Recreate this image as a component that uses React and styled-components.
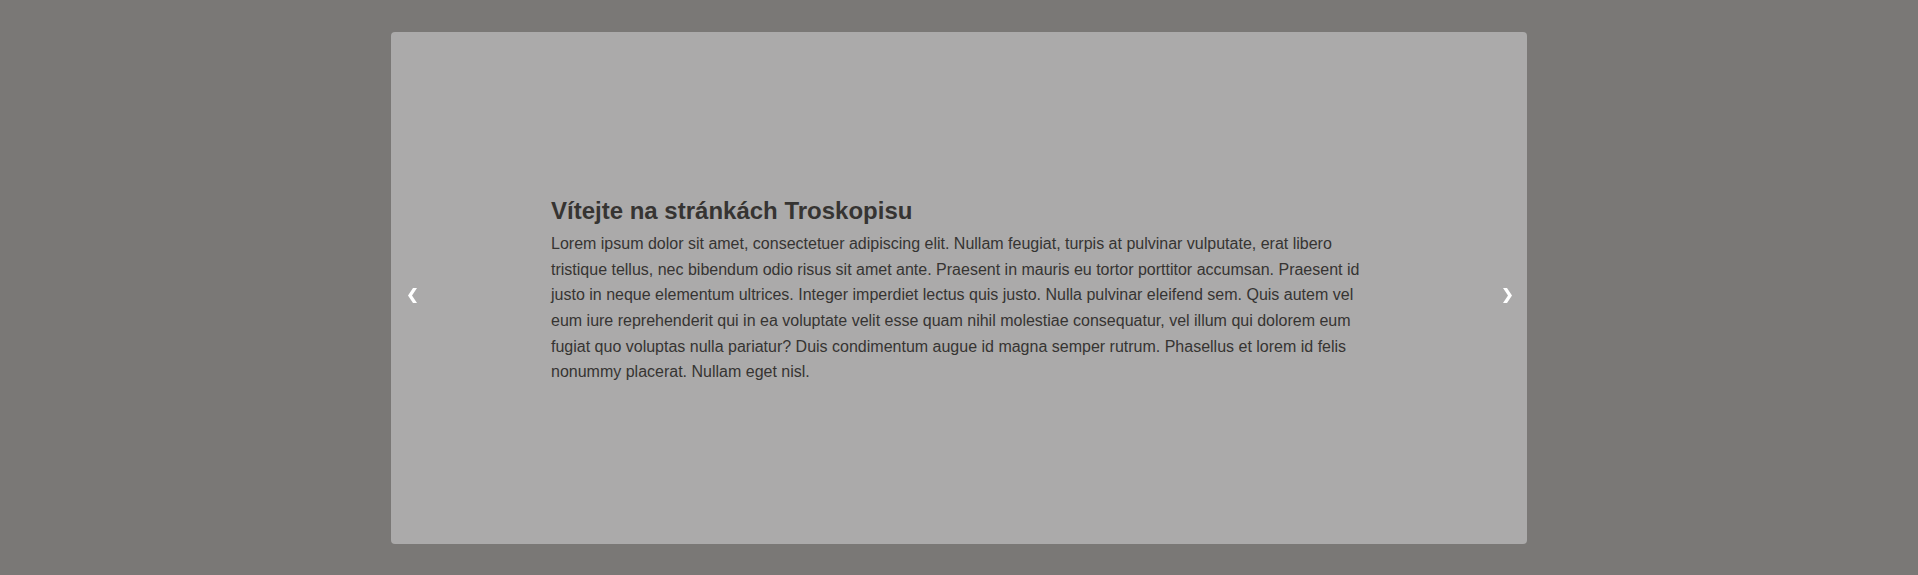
import React from 'react'
import styled, { createGlobalStyle } from 'styled-components'

const GlobalStyle = createGlobalStyle`
  html, body {
    margin: 0;
    padding: 0;
    background: #7a7876;
    font-family: "Liberation Sans", Arial, sans-serif;
  }
`

const Page = styled.div`
  min-height: 575px;
  padding-top: 32px;
  box-sizing: border-box;
`

const Carousel = styled.div`
  width: 1136px;
  height: 512px;
  margin: 0 auto;
  background: #abaaaa;
  border-radius: 4px;
  display: grid;
  grid-template-columns: 42px 1fr 42px;
  align-items: center;
`

const Control = styled.button`
  background: none;
  border: none;
  padding: 0;
  margin-top: 14px;
  height: 40px;
  display: flex;
  align-items: center;
  justify-content: ${p => (p.$side === 'left' ? 'flex-end' : 'flex-start')};
  padding-${p => (p.$side === 'left' ? 'right' : 'left')}: ${p => (p.$side === 'left' ? 16 : 18)}px;
  cursor: pointer;
  svg {
    display: block;
  }
`

const Caption = styled.div`
  width: 816px;
  margin: 0 auto;
  padding-top: 7px;
  color: #363432;
`

const Title = styled.h2`
  font-size: 24px;
  font-weight: bold;
  line-height: 26px;
  margin: 0 0 7px;
`

const Text = styled.p`
  font-size: 16px;
  line-height: 25.7px;
  margin: 0;
`

const Chevron = ({ dir }) => (
  <svg width="9" height="15" viewBox="0 0 9 15">
    <path
      d={dir === 'left'
        ? 'M5 0 L9 0 L4 7.5 L9 15 L5 15 L0 7.5 Z'
        : 'M4 0 L0 0 L5 7.5 L0 15 L4 15 L9 7.5 Z'}
      fill="#fff"
    />
  </svg>
)

export default function App () {
  return (
    <Page>
      <GlobalStyle />
      <Carousel>
        <Control $side="left" aria-label="previous">
          <Chevron dir="left" />
        </Control>
        <Caption>
          <Title>Vítejte na stránkách Troskopisu</Title>
          <Text>
            Lorem ipsum dolor sit amet, consectetuer adipiscing elit. Nullam feugiat, turpis at pulvinar vulputate, erat libero
            tristique tellus, nec bibendum odio risus sit amet ante. Praesent in mauris eu tortor porttitor accumsan. Praesent id
            justo in neque elementum ultrices. Integer imperdiet lectus quis justo. Nulla pulvinar eleifend sem. Quis autem vel
            eum iure reprehenderit qui in ea voluptate velit esse quam nihil molestiae consequatur, vel illum qui dolorem eum
            fugiat quo voluptas nulla pariatur? Duis condimentum augue id magna semper rutrum. Phasellus et lorem id felis
            nonummy placerat. Nullam eget nisl.
          </Text>
        </Caption>
        <Control $side="right" aria-label="next">
          <Chevron dir="right" />
        </Control>
      </Carousel>
    </Page>
  )
}
